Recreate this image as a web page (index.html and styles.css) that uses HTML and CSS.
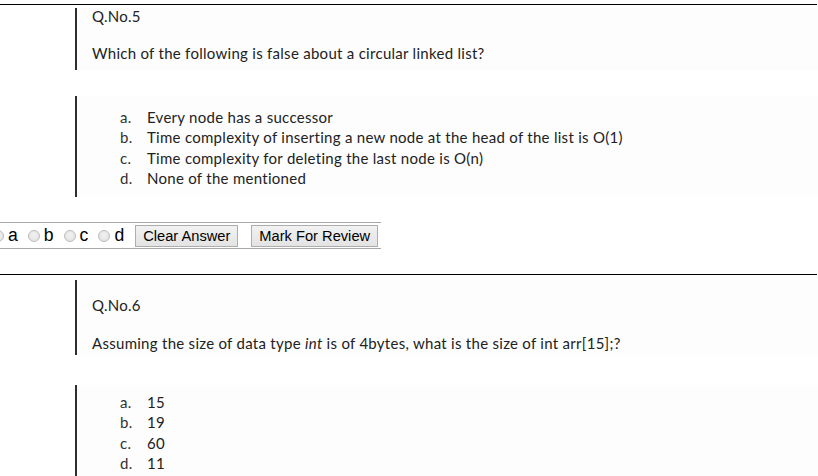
FILE: index.html
```html
<!DOCTYPE html>
<html lang="en">
<head>
<meta charset="utf-8">
<title>Quiz</title>
<link rel="stylesheet" href="styles.css">
</head>
<body>
<div class="page">
  <hr class="divider divider-top">
  <section class="question">
    <div class="stem stem-first">
      <p class="qno">Q.No.5</p>
      <p class="qtext">Which of the following is false about a circular linked list?</p>
    </div>
    <div class="opts opts-first">
      <ol class="opt-list">
        <li><span class="letter">a.</span><span>Every node has a successor</span></li>
        <li><span class="letter">b.</span><span>Time complexity of inserting a new node at the head of the list is O(1)</span></li>
        <li><span class="letter">c.</span><span>Time complexity for deleting the last node is O(n)</span></li>
        <li><span class="letter">d.</span><span>None of the mentioned</span></li>
      </ol>
    </div>
  </section>
  <div class="answer-row">
    <div class="choices">
      <label class="choice"><input type="radio" name="q5"><span>a</span></label>
      <label class="choice"><input type="radio" name="q5"><span>b</span></label>
      <label class="choice"><input type="radio" name="q5"><span>c</span></label>
      <label class="choice"><input type="radio" name="q5"><span>d</span></label>
    </div>
    <button class="btn" type="button">Clear Answer</button>
    <button class="btn" type="button">Mark For Review</button>
  </div>
  <hr class="divider divider-second">
  <section class="question">
    <div class="stem stem-second">
      <p class="qno">Q.No.6</p>
      <p class="qtext">Assuming the size of data type <i>int</i> is of 4bytes, what is the size of int arr[15];?</p>
    </div>
    <div class="opts opts-second">
      <ol class="opt-list">
        <li><span class="letter">a.</span><span>15</span></li>
        <li><span class="letter">b.</span><span>19</span></li>
        <li><span class="letter">c.</span><span>60</span></li>
        <li><span class="letter">d.</span><span>11</span></li>
      </ol>
    </div>
  </section>
</div>
</body>
</html>
```

FILE: styles.css
```css
html, body {
  margin: 0;
  padding: 0;
  background: #ffffff;
  overflow: hidden;
}

.page {
  width: 818px;
  height: 476px;
  overflow: hidden;
}

.divider {
  border: 0;
  border-top: 1px solid #000;
  margin: 0;
  width: 817px;
}

.divider-top {
  margin-top: 4px;
}

.divider-second {
  margin-top: 25px;
}

.question {
  padding-left: 75px;
  font-family: Lato, "Open Sans", sans-serif;
  font-size: 15px;
  letter-spacing: 0.28px;
  color: #222;
}

.stem {
  border-left: 2px solid #2e2e2e;
  padding-left: 15px;
  background: #fdfdfd;
}

.qno, .qtext {
  margin: 0;
  line-height: 16px;
}

.stem-first {
  margin-top: 3px;
  padding-top: 0;
  padding-bottom: 9px;
}

.stem-first .qtext {
  margin-top: 21px;
}

.stem-second {
  margin-top: 5px;
  padding-top: 17px;
  padding-bottom: 4px;
}

.stem-second .qtext {
  margin-top: 22px;
}

.opts {
  border-left: 2px solid #2e2e2e;
  background: #fdfdfd;
}

.opts-first {
  margin-top: 26px;
  padding: 11px 0 9px;
}

.opts-second {
  margin-top: 30px;
  padding: 7px 0 9px;
}

.opt-list {
  list-style: none;
  margin: 0;
  padding: 0 0 0 43px;
}

.opt-list li {
  display: flex;
  line-height: 20.3px;
}

.letter {
  width: 27px;
  color: #333;
}

.answer-row {
  margin-top: 25px;
  width: 381px;
  border-top: 1px solid #a8a8a8;
  border-bottom: 1px solid #a8a8a8;
  height: 25px;
  display: flex;
  align-items: center;
  font-family: Arial, "Liberation Sans", sans-serif;
}

.choices {
  display: flex;
  align-items: center;
  margin-left: -8px;
  margin-right: 11px;
}

.choice {
  display: flex;
  align-items: center;
  font-size: 17.6px;
  color: #000;
  margin-right: 10px;
}

.choice:last-child {
  margin-right: 0;
}

.choice input {
  appearance: none;
  -webkit-appearance: none;
  width: 12px;
  height: 12px;
  margin: 0 4px 0 0;
  border-radius: 50%;
  border: 1px solid #bcbcbc;
  background: radial-gradient(circle at 50% 40%, #f2f2f2 0%, #dedede 100%);
  box-sizing: border-box;
}

.btn {
  font-family: Arial, "Liberation Sans", sans-serif;
  font-size: 14.67px;
  color: #000;
  height: 22px;
  padding: 0 7px;
  border: 1px solid #adadad;
  border-radius: 0;
  background: linear-gradient(#f2f2f2, #e3e3e3);
  line-height: 20px;
}

.btn + .btn {
  margin-left: 13px;
}
```
